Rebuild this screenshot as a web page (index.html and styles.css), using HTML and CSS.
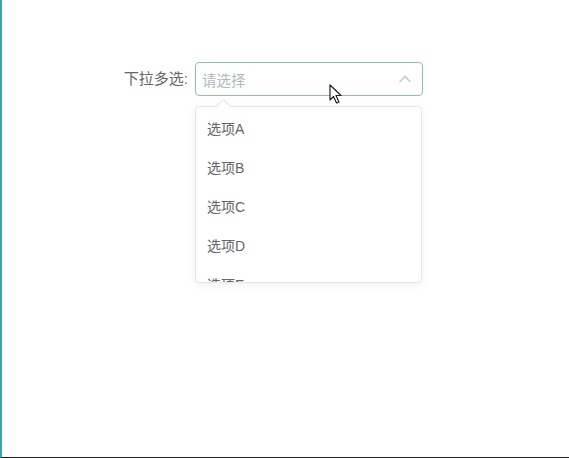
FILE: index.html
```html
<!DOCTYPE html>
<html lang="zh-CN">
<head>
  <meta charset="UTF-8">
  <title>下拉多选</title>
  <link rel="stylesheet" href="styles.css">
</head>
<body>
  <div class="page">
    <div class="form-row">
      <div class="form-label">下拉多选:</div>
      <div class="select">
        <div class="select-input">
          <span class="placeholder">请选择</span>
          <svg class="arrow" width="14" height="14" viewBox="0 0 14 14" fill="none">
            <path d="M1.5 10L7 4.5L12.5 10" stroke="#c8ccd2" stroke-width="1.6"/>
          </svg>
        </div>
        <div class="dropdown">
          <div class="dropdown-arrow"></div>
          <ul class="options">
            <li>选项A</li>
            <li>选项B</li>
            <li>选项C</li>
            <li>选项D</li>
            <li>选项E</li>
          </ul>
        </div>
        <svg class="cursor" width="14" height="20" viewBox="0 0 14 20">
          <path d="M1 1V16L4.5 12.5L7.5 19L10 18L7 11.5H12Z" fill="#fff" stroke="#222" stroke-width="1.2" stroke-linejoin="round"/>
        </svg>
      </div>
    </div>
  </div>
</body>
</html>
```

FILE: styles.css
```css
html, body {
  margin: 0;
  padding: 0;
  height: 100%;
}

body {
  font-family: "Liberation Sans", "Noto Sans CJK SC", sans-serif;
  background: #fff;
  color: #666;
}

.page {
  box-sizing: border-box;
  height: 458px;
  border-left: 2px solid #3aa6a8;
  border-bottom: 1px solid #1e1e1e;
  padding: 62px 0 0 0;
}

.form-row {
  display: flex;
  align-items: flex-start;
}

.form-label {
  width: 193px;
  height: 34px;
  line-height: 34px;
  text-align: right;
  font-size: 15px;
  color: #666;
  padding-right: 7px;
  box-sizing: border-box;
}

.select {
  position: relative;
  width: 228px;
}

.select-input {
  box-sizing: border-box;
  height: 34px;
  border: 1px solid #8cc4a2;
  border-radius: 4px;
  display: flex;
  align-items: center;
  justify-content: space-between;
  padding: 0 10px 0 6px;
}

.placeholder {
  font-size: 14.5px;
  color: #b4b8bf;
}

.dropdown {
  position: absolute;
  top: 44px;
  left: 0;
  width: 227px;
  height: 177px;
  box-sizing: border-box;
  border: 1px solid #e4e7ed;
  border-radius: 4px;
  background: #fff;
  box-shadow: 0 2px 10px rgba(0, 0, 0, 0.06);
}

.dropdown-arrow {
  position: absolute;
  top: -6px;
  left: 22px;
  width: 10px;
  height: 10px;
  background: #fff;
  border-left: 1px solid #e4e7ed;
  border-top: 1px solid #e4e7ed;
  transform: rotate(45deg);
}

.options {
  list-style: none;
  margin: 0;
  padding: 3px 0 0;
  height: 172px;
  overflow: hidden;
  position: relative;
}

.options li {
  height: 39px;
  line-height: 39px;
  padding-left: 11px;
  font-size: 14px;
  color: #666;
}

.cursor {
  position: absolute;
  top: 22px;
  left: 134px;
}
```
